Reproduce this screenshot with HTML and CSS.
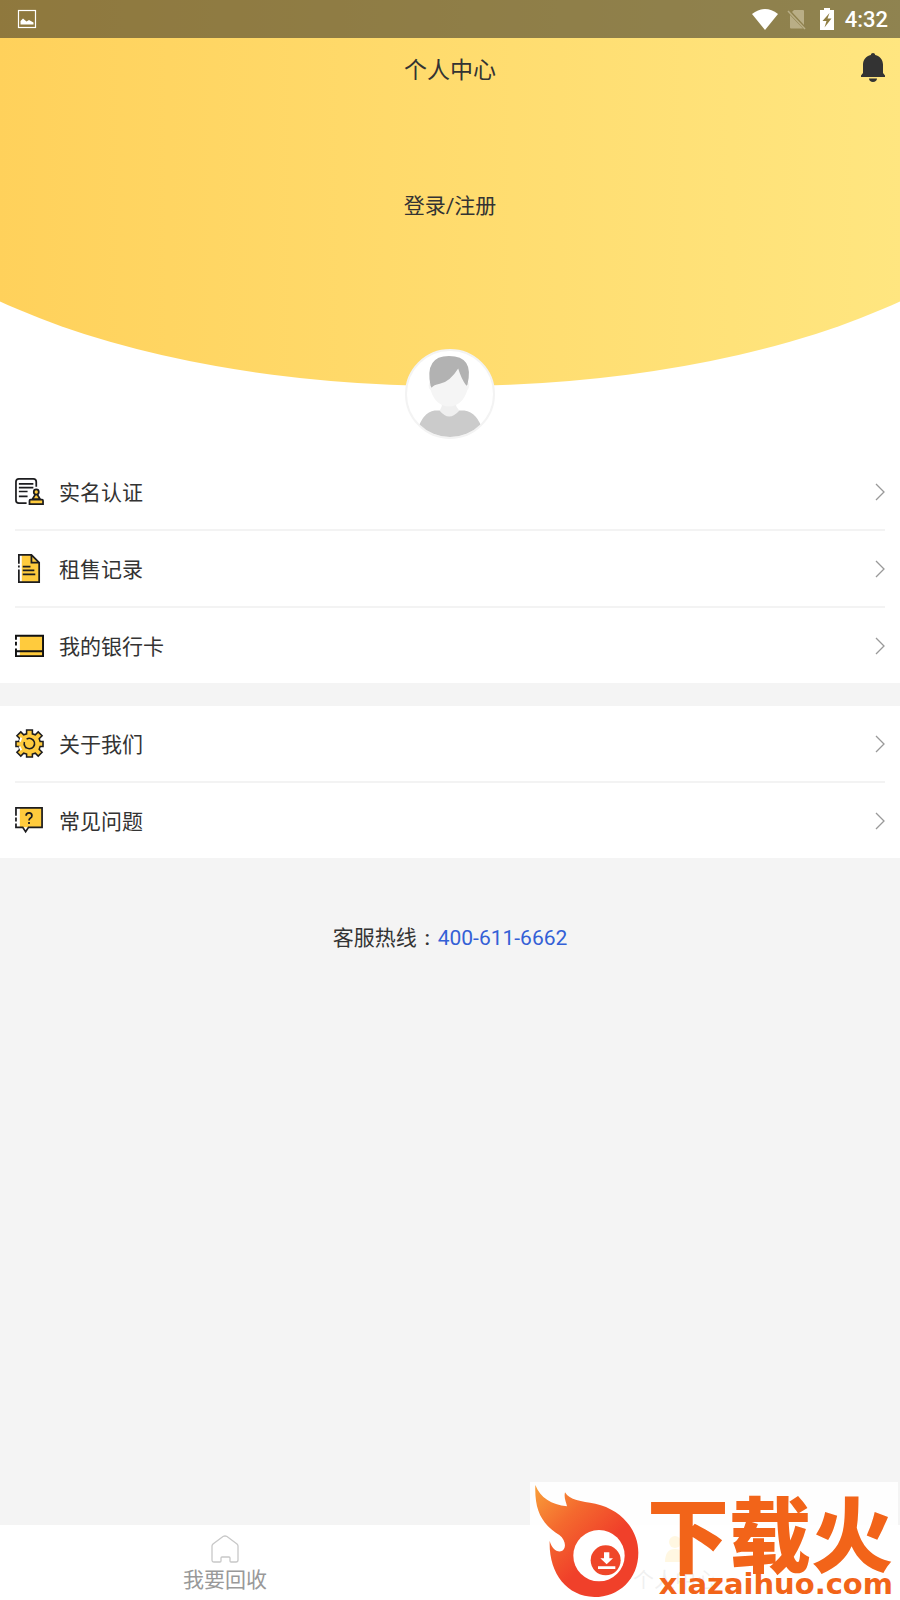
FILE: index.html
```html
<!DOCTYPE html>
<html lang="zh-CN">
  <head>
    <meta charset="UTF-8" />
    <meta name="viewport" content="width=device-width, initial-scale=1" />
    <title>个人中心</title>
    <link rel="stylesheet" href="styles.css">
  </head>
  <body>
    <header class="hero">
      <div class="status-bar">
        <svg class="status-photo" width="20" height="20" viewBox="0 0 20 20">
          <rect x="1.5" y="1.5" width="17" height="17" fill="none" stroke="#fff" stroke-width="1.2" />
          <path d="M3.5 15.5V12L6 9.500l3.500 3 2.500-1.500 4.500 2.500v2z" fill="#fff" />
        </svg>
        <div class="status-right">
          <svg width="26" height="21" viewBox="0 0 26 21">
            <path d="M0 5Q13-5 26 5L13 21z" fill="#fff" />
          </svg>
          <svg class="status-sim" width="20" height="21" viewBox="0 0 20 21">
            <path d="M7 1h9q1 0 1 1v14L5 3zM3 6l13 13.500H4q-1 0-1-1z" fill="#b9ae86" />
            <path d="M1 2l17 18" stroke="#b9ae86" stroke-width="1.5" />
          </svg>
          <svg class="status-battery" width="14" height="22" viewBox="0 0 14 22">
            <path d="M4 0h6v2h4v20H0V2h4z" fill="#fff" />
            <path d="M9.500 5L2.500 13h4L4.500 19.500l7-9H7.500z" fill="#8e7d42" />
          </svg>
          <span class="clock">4:32</span>
        </div>
      </div>

      <div class="title-bar">
        <h1>个人中心</h1>
        <button type="button" class="bell" aria-label="消息">
          <svg width="24" height="29" viewBox="0 0 24 29">
            <path d="M12 0c1.300 0 2 .8 2.200 1.900C19 3 22 6.800 22 11.500V20l2 2.500V24H0v-1.500L2 20v-8.500C2 6.800 5 3 9.800 1.900 10 .8 10.700 0 12 0zM8 25.500h8c0 2-1.800 3.500-4 3.500s-4-1.500-4-3.500z" fill="#333" />
          </svg>
        </button>
      </div>

      <a class="login" href="#">登录/注册</a>

      <div class="avatar">
        <svg viewBox="0 0 84 84">
          <path d="M34 48h14v14H34z" fill="#f0f0f0" />
          <path d="M10 84V78q5-18 17-20h5q9 10 19 0h5q13 2 18 20v6z" fill="#cbcbcb" />
          <path d="M32 58q9 12 19 0l-3-4H34z" fill="#efefef" />
          <path d="M22 30q-2 6 1 8 5 16 18 16t18-16q3-3 1-8L49 14 31 20z" fill="#f5f5f5" />
          <path d="M23 34q-6-29 18-29 25 0 18 28l-1 1q-5-7-8-17-8 13-18 15-6 1-8 4z" fill="#b2b2b2" />
        </svg>
      </div>
    </header>

    <main>
      <nav class="menu">
        <a class="menu-row" href="#">
          <svg class="icon" viewBox="0 0 30 30" fill="none" stroke="#1d1d1f" stroke-width="1.8">
            <path d="M22 10V5q0-3-3-3H4Q1 2 1 5v19q0 3 3 3h8M4 7h15M4 11h15M4 15h9M4 20h9" />
            <path d="M21 18l-3 5h8l-3-5zM16 23.500h12q1 0 1 1V28H15v-3.500q0-1 1-1z" fill="#ffcb3d" />
            <circle cx="22" cy="15.500" r="2.600" fill="#ffcb3d" />
          </svg>
          <span>实名认证</span>
          <svg class="arrow" viewBox="0 0 10 18"><path d="M1 1l8 8-8 8" /></svg>
        </a>
        <a class="menu-row" href="#">
          <svg class="icon" viewBox="0 0 30 30">
            <path d="M7 1h10l8 8v20H7z" fill="#ffcb3d" />
            <path d="M4 10V1h13l8 8v20H4V16M4 12v2M17 1v8h8M8 13h8M8 17h12M8 21h13" fill="none" stroke="#1d1d1f" stroke-width="1.8" />
          </svg>
          <span>租售记录</span>
          <svg class="arrow" viewBox="0 0 10 18"><path d="M1 1l8 8-8 8" /></svg>
        </a>
        <a class="menu-row" href="#">
          <svg class="icon" viewBox="0 0 30 30">
            <path d="M5 5h24v21H5z" fill="#ffcb3d" />
            <path d="M1 9V5h28v21H1v-8M1 11v4M1 21h28" fill="none" stroke="#111" stroke-width="2" />
          </svg>
          <span>我的银行卡</span>
          <svg class="arrow" viewBox="0 0 10 18"><path d="M1 1l8 8-8 8" /></svg>
        </a>
      </nav>

      <nav class="menu">
        <a class="menu-row" href="#">
          <svg class="icon" viewBox="0 0 30 30">
            <path d="M12 1h6v4l3 1 3-3 4 4-3 3 1 3h3v5h-3l-1 3 3 3-4 4-3-3-3 1v3h-6v-3l-3-1-3 3-4-4 3-3-1-3H1v-5h3l1-3-3-3 4-4 3 3 3-1z" fill="#ffcb3d" stroke="#1d1d1f" stroke-width="1.6" />
            <path d="M6.500 9L5 13M4.500 18l2 4" stroke="#fff" stroke-width="2" />
            <path d="M12 10.500a5.400 5.400 0 1 1-2.300 3M10.500 18.500l1 1" fill="none" stroke="#1d1d1f" stroke-width="1.6" />
          </svg>
          <span>关于我们</span>
          <svg class="arrow" viewBox="0 0 10 18"><path d="M1 1l8 8-8 8" /></svg>
        </a>
        <a class="menu-row" href="#">
          <svg class="icon" viewBox="0 0 30 30">
            <path d="M5 2h23v20H5z" fill="#ffcb3d" />
            <path d="M1 10V2h27v20H14l-3 4.500L8 22H1v-4M1 12v4" fill="none" stroke="#1d1d1f" stroke-width="1.8" />
            <path d="M11.500 10q0-3 3-3t3 3q0 1.500-1.500 2.500t-1.500 2.500M14.500 16.500v2" fill="none" stroke="#1d1d1f" stroke-width="1.8" />
          </svg>
          <span>常见问题</span>
          <svg class="arrow" viewBox="0 0 10 18"><path d="M1 1l8 8-8 8" /></svg>
        </a>
      </nav>

      <p class="hotline">客服热线<span class="colon">:</span><a href="tel:400-611-6662">400-611-6662</a></p>
    </main>

    <footer class="tab-bar">
      <a class="tab" href="#">
        <svg width="28" height="28" viewBox="0 0 28 28">
          <path d="M1 11q0-1 1-2L12 1.500q2-1 4 0L26 9q1 1 1 2v14q0 2-2 2h-5q-1 0-1-1v-3q0-1-1-1h-7q-1 0-1 1v3q0 1-1 1H3q-2 0-2-2z" fill="none" stroke="#c8c8c8" stroke-width="1.3" />
        </svg>
        <span>我要回收</span>
      </a>
      <a class="tab" href="#">
        <svg width="28" height="28" viewBox="0 0 28 28">
          <circle cx="14" cy="7" r="6" fill="#ffcb3d" />
          <path d="M4 27q0-13 10-13t10 13z" fill="#ffcb3d" />
        </svg>
        <span>个人中心</span>
      </a>

      <div class="watermark">
        <svg class="flame" viewBox="44 40 312 340">
          <defs>
            <linearGradient id="fire" x1="0" y1="0" x2="0.7" y2="0.8">
              <stop offset="0" stop-color="#f9a03a" />
              <stop offset="0.4" stop-color="#f4692e" />
              <stop offset="0.8" stop-color="#f0402a" />
            </linearGradient>
          </defs>
          <path d="M45 42C60 80 93 101 140 106C137 92 130 80 134 64C148 88 182 91 225 98C302 115 354 175 354 245C354 325 295 378 222 378C138 376 85 306 88 210C94 230 105 243 122 241C139 236 138 208 117 192C65 160 42 120 45 42Z" fill="url(#fire)" />
          <circle cx="236" cy="254" r="77" fill="#fff" />
          <circle cx="256" cy="268" r="45" fill="#ef4629" />
          <path d="M251 244h16v18h11l-19 18-19-18h11zM233 286h52v8h-52z" fill="#fff" />
        </svg>
        <div class="watermark-text">
          <strong>下载火</strong>
          <span>xiazaihuo.com</span>
        </div>
      </div>
    </footer>
  </body>
</html>
```

FILE: styles.css
```css
* {
  box-sizing: border-box;
}
body {
  display: flex;
  flex-direction: column;
  min-height: 100vh;
  margin: 0;
  background-color: #f4f4f4;
  color: #333;
  font-family: Roboto, "Noto Sans CJK SC", sans-serif;
  font-size: 21px;
  line-height: 30px;
}
a {
  color: inherit;
  text-decoration: none;
}
svg {
  display: block;
}

/* yellow header with the curved bottom edge */
.hero {
  position: relative;
  z-index: 0;
  display: flex;
  flex-direction: column;
  align-items: center;
  overflow: hidden;
  padding-bottom: 15px;
  background-color: #fff;
}
.hero::before {
  content: "";
  position: absolute;
  z-index: -1;
  top: 0;
  bottom: 68px;
  left: -18%;
  right: -18%;
  border-radius: 0 0 50% 50% / 0 0 68% 68%;
  background: linear-gradient(to right, #ffd15b 13%, #ffe680 87%);
}
.status-bar {
  display: flex;
  align-items: center;
  justify-content: space-between;
  width: 100%;
  height: 38px;
  padding: 0 12px 0 17px;
  background-color: rgba(32, 32, 32, 0.5);
}
.status-right {
  display: flex;
  align-items: center;
  color: #fff;
}
.status-sim {
  margin-left: 9px;
}
.status-battery {
  margin: 0 11px 0 13px;
}
.clock {
  padding-top: 2px;
  font-size: 22px;
  font-weight: 500;
}
.title-bar {
  position: relative;
  display: flex;
  align-items: center;
  justify-content: center;
  width: 100%;
  height: 64px;
}
h1 {
  margin: 0;
  padding-top: 2px;
  font-size: 23px;
  font-weight: 400;
}
.bell {
  position: absolute;
  top: 15px;
  right: 15px;
  padding: 0;
  border: none;
  background: none;
  cursor: pointer;
}
.login {
  margin-top: 89px;
}
.avatar {
  width: 90px;
  height: 90px;
  margin-top: 128px;
  overflow: hidden;
  border: 2px solid #f3f3f3;
  border-radius: 50%;
  background-color: #fff;
}

/* menu */
main {
  flex: 1;
}
.menu {
  padding: 0 15px;
  background-color: #fff;
}
.menu + .menu {
  margin-top: 23px;
}
.menu-row {
  display: flex;
  align-items: center;
  height: 77px;
  border-bottom: 2px solid #f3f3f3;
}
.menu-row:last-child {
  height: 75px;
  border-bottom: none;
}
.menu-row span {
  padding-top: 2px;
}
.icon {
  width: 29px;
  height: 29px;
  margin-right: 15px;
}
.arrow {
  width: 10px;
  height: 18px;
  margin-left: auto;
  fill: none;
  stroke: #999;
  stroke-width: 1.3;
}
.hotline {
  margin: 65px 0 0;
  text-align: center;
}
.hotline a {
  color: #3360d6;
}
.colon {
  display: inline-block;
  width: 21px;
  font-weight: 500;
  text-align: center;
}

/* bottom tabs */
.tab-bar {
  position: relative;
  display: flex;
  height: 75px;
  background-color: #fff;
  color: #999;
}
.tab {
  display: flex;
  flex: 1;
  flex-direction: column;
  align-items: center;
  padding-top: 10px;
}
.tab span {
  margin-top: 2px;
}
.watermark {
  position: absolute;
  right: 2px;
  bottom: 0;
  display: flex;
  width: 368px;
  height: 118px;
  padding: 2px 5px;
  background-color: rgba(255, 255, 255, 0.85);
}
.flame {
  width: 104px;
  height: 114px;
}
.watermark-text {
  display: flex;
  flex: 1;
  flex-direction: column;
  align-items: flex-end;
  justify-content: flex-end;
  color: #f26419;
}
.watermark-text strong {
  font-family: "Noto Sans CJK SC", sans-serif;
  font-size: 82px;
  font-weight: 900;
  line-height: 78px;
}
.watermark-text span {
  font-family: "DejaVu Sans", sans-serif;
  font-size: 29px;
  font-weight: 700;
  line-height: 28px;
}
```
